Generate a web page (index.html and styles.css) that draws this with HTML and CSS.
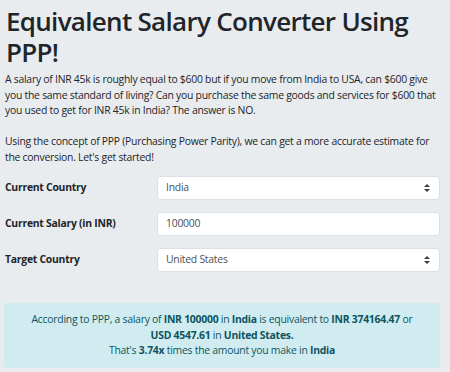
FILE: index.html
```html
<html>
    <head>
        <link rel="stylesheet" href="styles.css">
    </head>
    <body>
        <div class="page">
            <h1>Equivalent Salary Converter Using PPP!</h1>
            <p class="intro">
                A salary of INR 45k is roughly equal to $600 but if you move from India to USA, can $600 give you the same standard of living? Can you purchase the same goods and services for $600 that you used to get for INR 45k in India? The answer is NO.
                <br><br>
                Using the concept of PPP (Purchasing Power Parity), we can get a more accurate estimate for the conversion. Let's get started!
            </p>
            <form class="converter">
                <div class="form-row">
                    <label>Current Country</label>
                    <div class="field select">
                        <span>India</span>
                        <svg class="caret" width="6" height="8" viewBox="0 0 6 8"><path d="M3 0 L6 3 H0 Z M3 8 L6 5 H0 Z" fill="#343a40"/></svg>
                    </div>
                </div>
                <div class="form-row">
                    <label>Current Salary (in INR)</label>
                    <div class="field"><span>100000</span></div>
                </div>
                <div class="form-row">
                    <label>Target Country</label>
                    <div class="field select">
                        <span>United States</span>
                        <svg class="caret" width="6" height="8" viewBox="0 0 6 8"><path d="M3 0 L6 3 H0 Z M3 8 L6 5 H0 Z" fill="#343a40"/></svg>
                    </div>
                </div>
            </form>
            <div class="alert">
                According to PPP, a salary of <b>INR 100000</b> in <b>India</b> is equivalent to <b>INR 374164.47</b> or <b>USD&nbsp;4547.61</b> in <b>United States.</b><br>
                That's <b>3.74x</b> times the amount you make in <b>India</b>
            </div>
        </div>
    </body>
</html>
```

FILE: styles.css
```css
body{
    margin: 0;
    background-color: #e9ecef;
    color: #212529;
    font-family: 'Open Sans', sans-serif;
    font-size: 10.4px;
    line-height: 15.5px;
    letter-spacing: -0.25px;
}
.page{
    padding: 0 10px 0 4px;
}
h1{
    font-size: 26px;
    font-weight: 600;
    line-height: 31px;
    letter-spacing: -0.7px;
    margin: 6px 0 4px 2px;
}
.intro{
    margin: 0 0 11px 1px;
}
.converter{
    margin: 0;
}
.form-row{
    display: grid;
    grid-template-columns: 153px 1fr;
    align-items: center;
    margin-bottom: 12px;
}
.form-row label{
    font-weight: bold;
    padding-left: 1px;
}
.field{
    height: 22px;
    background: #fff;
    border: 1px solid #dcdfe3;
    border-radius: 3px;
    display: flex;
    align-items: center;
    justify-content: space-between;
    padding: 0 9px 0 8px;
    color: #495057;
}
.alert{
    margin-top: 31px;
    background-color: #d1ecf1;
    color: #0c5460;
    border-radius: 4px;
    text-align: center;
    padding: 9px 13px 9px;
}
```
